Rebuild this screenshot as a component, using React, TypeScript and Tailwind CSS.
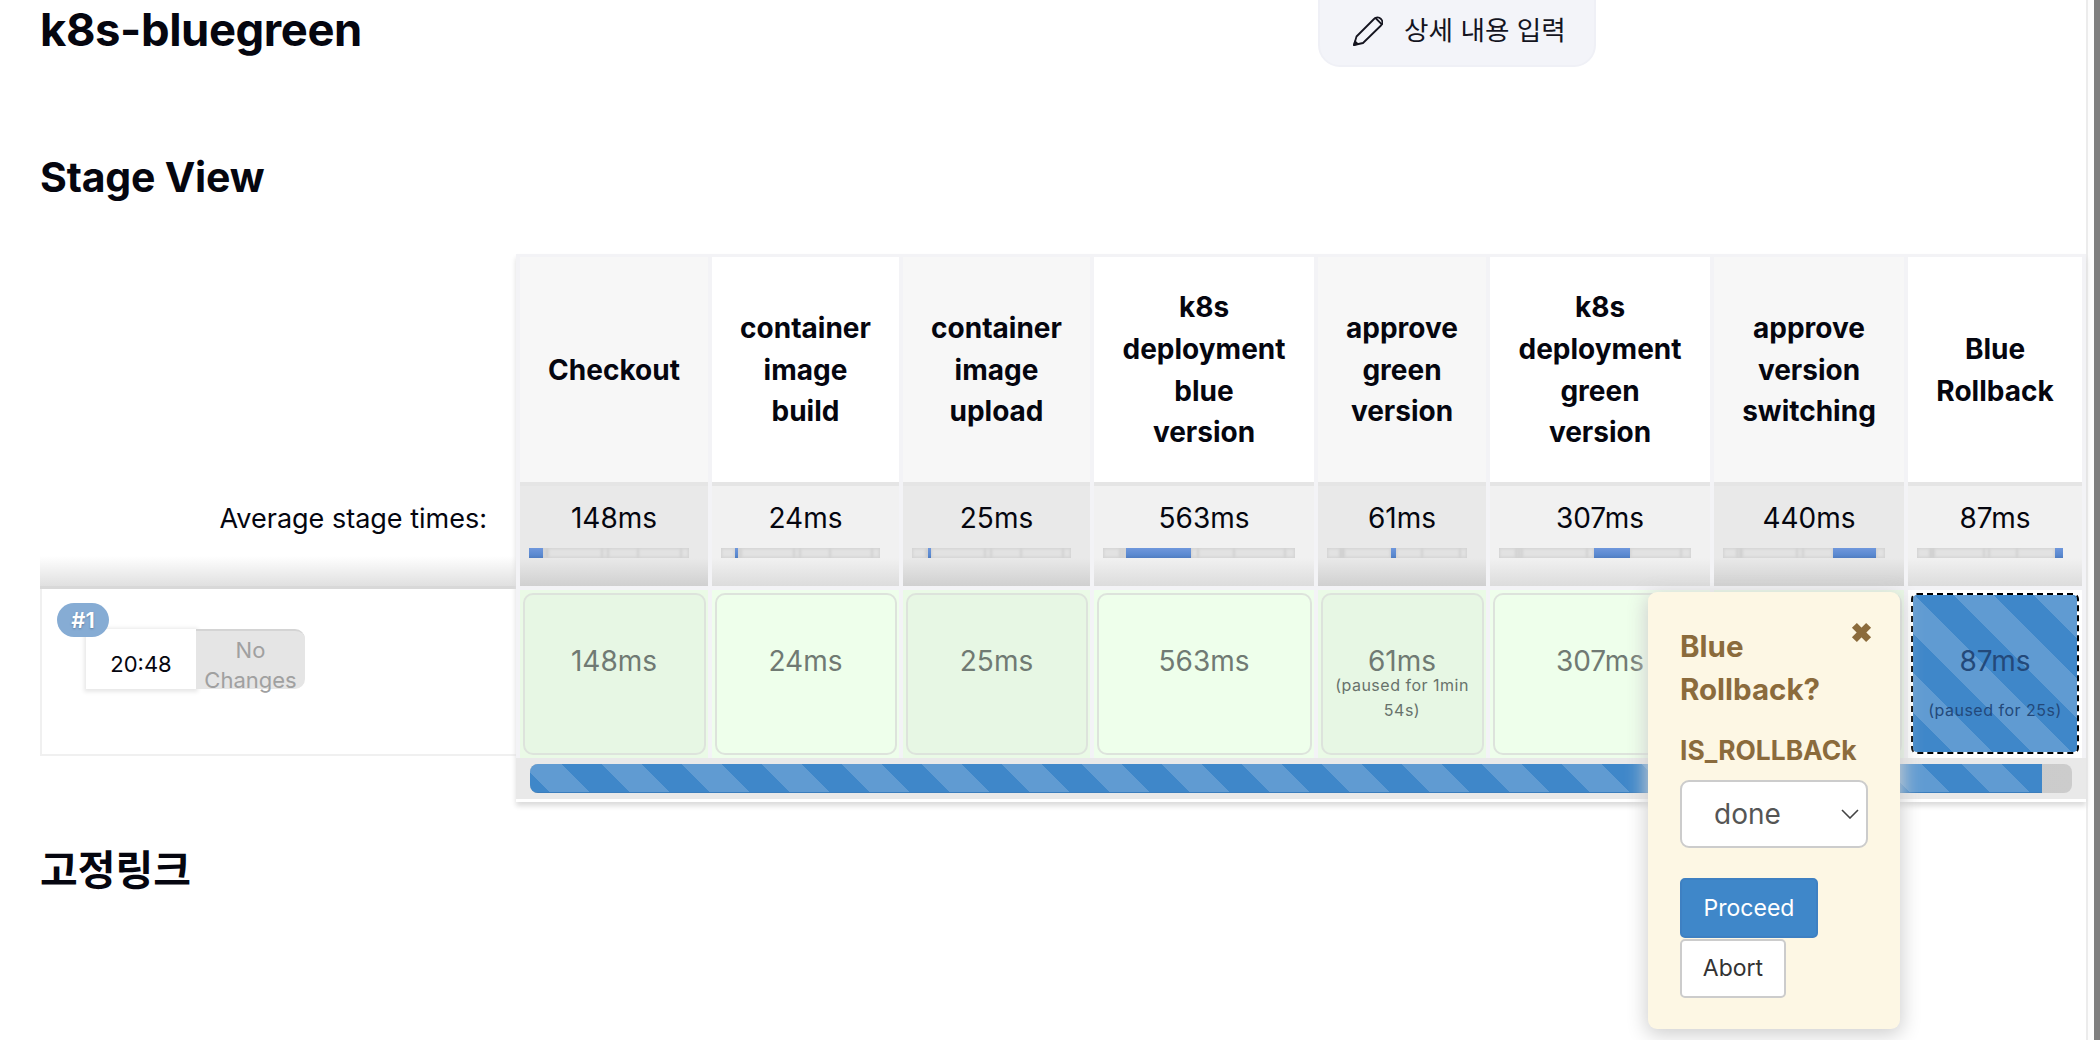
const TIMES = [148, 24, 25, 563, 61, 307, 440, 87];

const STAGES = [
  { lines: ["Checkout"], ms: "148ms" },
  { lines: ["container", "image", "build"], ms: "24ms" },
  { lines: ["container", "image", "upload"], ms: "25ms" },
  { lines: ["k8s", "deployment", "blue", "version"], ms: "563ms" },
  { lines: ["approve", "green", "version"], ms: "61ms" },
  { lines: ["k8s", "deployment", "green", "version"], ms: "307ms" },
  { lines: ["approve", "version", "switching"], ms: "440ms" },
  { lines: ["Blue", "Rollback"], ms: "87ms" },
];

function MiniBar({ active }: { active: number }) {
  return (
    <div className="mt-[12px] mr-[19px] ml-[9px] flex h-[10px] bg-[#d6d6d6]">
      {TIMES.map((t, i) =>
        i === active ? (
          <div
            key={i}
            className="h-full bg-[linear-gradient(to_bottom,#6f97dc,#5a89d0_70%,#4f7cc0)]"
            style={{ flexGrow: t, flexBasis: 0, minWidth: 3 }}
          />
        ) : (
          <div
            key={i}
            className="h-full bg-[#e2e2e2] shadow-[inset_0_0_3px_1px_#d2d2d2] blur-[0.5px]"
            style={{ flexGrow: t, flexBasis: 0 }}
          />
        ),
      )}
    </div>
  );
}

function PencilIcon() {
  return (
    <svg viewBox="0 0 30 30" className="mr-[21px] h-[30px] w-[30px]" fill="none" stroke="#14141f" strokeWidth="1.8" strokeLinejoin="round" strokeLinecap="round">
      <path d="M1 29 L3.5 20.5 L21 3 C23 1 26 1 28 3 C29.8 5 29.8 7.5 28 9.5 L10 27 Z" />
      <path d="M22.5 2 L28.8 8.4" />
      <path d="M1 29 L2 25.5 L4.6 28 Z" fill="#14141f" />
    </svg>
  );
}

function CloseIcon() {
  return (
    <svg viewBox="0 0 21 21" className="absolute top-[30px] left-[203px] h-[21px] w-[21px]" fill="none" stroke="#8b6b3c" strokeWidth="7" strokeLinejoin="round">
      <path d="M3.4 3.4 L17.6 17.6 M17.6 3.4 L3.4 17.6" />
    </svg>
  );
}

function ChevronIcon() {
  return (
    <svg viewBox="0 0 18 10" className="h-[10px] w-[18px]" fill="none" stroke="#444444" strokeWidth="1.6">
      <path d="M1 1 L9 9 L17 1" />
    </svg>
  );
}

export default function App() {
  return (
    <div className="flex h-[1040px] w-[2100px] overflow-hidden bg-white font-['Inter','Noto_Sans_CJK_KR',sans-serif] text-[#05060f]">
      <main className="relative w-[2086px] shrink-0 pl-[40px]">
        <div className="flex h-[66px] items-start">
          <h1 className="mt-[5px] w-[1278px] text-[45.4px] leading-[50px] font-bold tracking-[-0.4px]">k8s-bluegreen</h1>
          <button className="-mt-[20px] flex h-[87px] w-[278px] items-center rounded-[22px] border-2 border-[#eff0f6] bg-[#f3f4f9] pt-[15px] pl-[33px] text-[26.6px] text-[#14141f]">
            <PencilIcon />
            상세 내용 입력
          </button>
        </div>

        <h2 className="mt-[81px] text-[41px] leading-[60px] font-bold tracking-[-0.2px]">Stage View</h2>

        <div className="mt-[47px] flex">
          <div className="flex w-[476px] shrink-0 flex-col pt-[232px]">
            <div className="flex h-[100px] justify-end bg-[linear-gradient(to_bottom,#ffffff_70%,#e0e0e0_100%)] pt-[15px] pr-[29px] text-[27px] leading-[36px]">
              Average stage times:
            </div>
            <div className="h-[3px] bg-[#d8d8d8]" />
            <div className="h-[167px] border-b-2 border-l-2 border-[#f0f0f0] pt-[14px] pl-[15px]">
              <div className="relative z-10 flex w-[52px] justify-center rounded-[17px] bg-[#86acd4] text-[22px] leading-[34px] font-semibold text-white [text-shadow:0_1px_2px_#5f7f9f]">
                #1
              </div>
              <div className="-mt-[8px] ml-[29px] flex h-[60px] w-[219px]">
                <div className="flex w-[110px] items-center justify-center bg-white pt-[10px] text-[22px] shadow-[0_1px_4px_2px_#e8e8e8]">20:48</div>
                <div className="h-[60px] w-[109px] rounded-r-[10px] border-t-2 border-[#d4d4d4] bg-[#e5e5e5] pt-[4px] text-center text-[22px] leading-[30px] text-[#a0a0a0]">
                  No
                  <br />
                  Changes
                </div>
              </div>
            </div>
          </div>

          <section className="w-[1570px] shrink-0 bg-[#f3f3f6] px-[4px] pt-[3px] shadow-[0_4px_5px_0_#dcdcdc]">
            <div className="grid grid-cols-[188px_187px_187px_220px_168px_220px_190px_174px] gap-x-[4px]">
              {STAGES.map((s, i) => (
                <div
                  key={i}
                  className={
                    "flex h-[225px] flex-col items-center justify-center pt-[2px] text-center text-[28px] leading-[41.8px] font-bold " +
                    (i % 2 === 0 ? "bg-[#f7f7f7]" : "bg-white")
                  }
                >
                  {s.lines.map((l) => (
                    <div key={l}>{l}</div>
                  ))}
                </div>
              ))}
              {STAGES.map((s, i) => (
                <div
                  key={i}
                  className={
                    "h-[104px] border-t-4 border-[#e5e5e5] pt-[14px] text-center text-[28px] leading-[36px] " +
                    (i % 2 === 0
                      ? "bg-[linear-gradient(to_bottom,#e9e9e9_72%,#d0d0d0_100%)]"
                      : "bg-[linear-gradient(to_bottom,#f1f1f1_72%,#dcdcdc_100%)]")
                  }
                >
                  {s.ms}
                  <MiniBar active={i} />
                </div>
              ))}
              {STAGES.map((s, i) =>
                i === 7 ? (
                  <div key={i} className="mt-[4px] h-[168px] bg-white p-[3px]">
                    <div className="h-[161px] rounded-[6px] border-2 border-dashed border-black bg-[repeating-linear-gradient(45deg,#3f87c9_0,#3f87c9_28px,#609bd2_28px,#609bd2_56px)] bg-clip-padding pt-[48px] text-center text-[28px] leading-[36px] text-[#23497a]">
                      {s.ms}
                      <div className="mt-[18px] text-[16px] leading-[26px] tracking-[0.5px]">(paused for 25s)</div>
                    </div>
                  </div>
                ) : (
                  <div key={i} className={"mt-[4px] h-[168px] px-[2.5px] py-[3px] " + (i % 2 === 0 ? "bg-[#eafae6]" : "bg-[#eefeeb]")}>
                    <div
                      className={
                        "h-[162px] rounded-[10px] border-2 border-[#dde3dc] pt-[48px] text-center text-[28px] leading-[36px] text-[#707a73] " +
                        (i % 2 === 0 ? "bg-[#e7f7e4]" : "bg-[#eeffeb]")
                      }
                    >
                      {s.ms}
                      {i === 4 && (
                        <div className="mx-[4px] -mt-[6px] text-[16px] leading-[25px] tracking-[0.5px] text-[#68726b]">(paused for 1min 54s)</div>
                      )}
                    </div>
                  </div>
                ),
              )}
            </div>
            <div className="-mx-[4px] flex h-[41px] items-start bg-[#e9e9e9] px-[14px] pt-[6px]">
              <div className="flex h-[29px] w-[1542px] overflow-hidden rounded-[8px] bg-[linear-gradient(to_right,#b4b4b4,#cccccc)]">
                <div className="h-full w-[1512px] border-b border-[#3a7dbc] bg-[repeating-linear-gradient(45deg,#3f87c9_0,#3f87c9_13.5px,#609bd2_13.5px,#609bd2_41.8px,#3f87c9_41.8px,#3f87c9_56.57px)]" />
              </div>
            </div>
            <div className="-mx-[4px] h-[3px] bg-white" />
          </section>
        </div>

        <h2 className="mt-[40px] text-[41px] leading-[56px] font-bold">고정링크</h2>

        <aside className="absolute top-[592px] left-[1648px] flex h-[437px] w-[252px] flex-col rounded-[9px] bg-[#fdf7e4] pt-[33px] pl-[32px] text-[#8b6b3c] shadow-[0_4px_20px_2px_#cfcfcf]">
          <CloseIcon />
          <div className="w-[170px] text-[29.5px] leading-[43px] font-bold">Blue Rollback?</div>
          <div className="mt-[21px] text-[26.4px] leading-[36px] font-bold">IS_ROLLBACk</div>
          <div className="mt-[12px] flex h-[68px] w-[188px] items-center justify-between rounded-[9px] border-2 border-[#cccccc] bg-white pr-[7px] pl-[32px] text-[28px] text-[#555555]">
            done
            <ChevronIcon />
          </div>
          <button className="mt-[30px] flex h-[60px] w-[138px] items-center justify-center rounded-[5px] border-2 border-[#3e80c2] bg-[#3f87c9] text-[23px] text-white">
            Proceed
          </button>
          <button className="mt-[1px] flex h-[59px] w-[106px] items-center justify-center rounded-[5px] border-2 border-[#cccccc] bg-white text-[23px] text-[#333333]">
            Abort
          </button>
        </aside>
      </main>
      <div className="h-full w-[8px] border-l-2 border-[#ececec] bg-[#fcfcfc]" />
      <div className="h-full w-[6px] bg-[#7e7e7e]" />
    </div>
  );
}
